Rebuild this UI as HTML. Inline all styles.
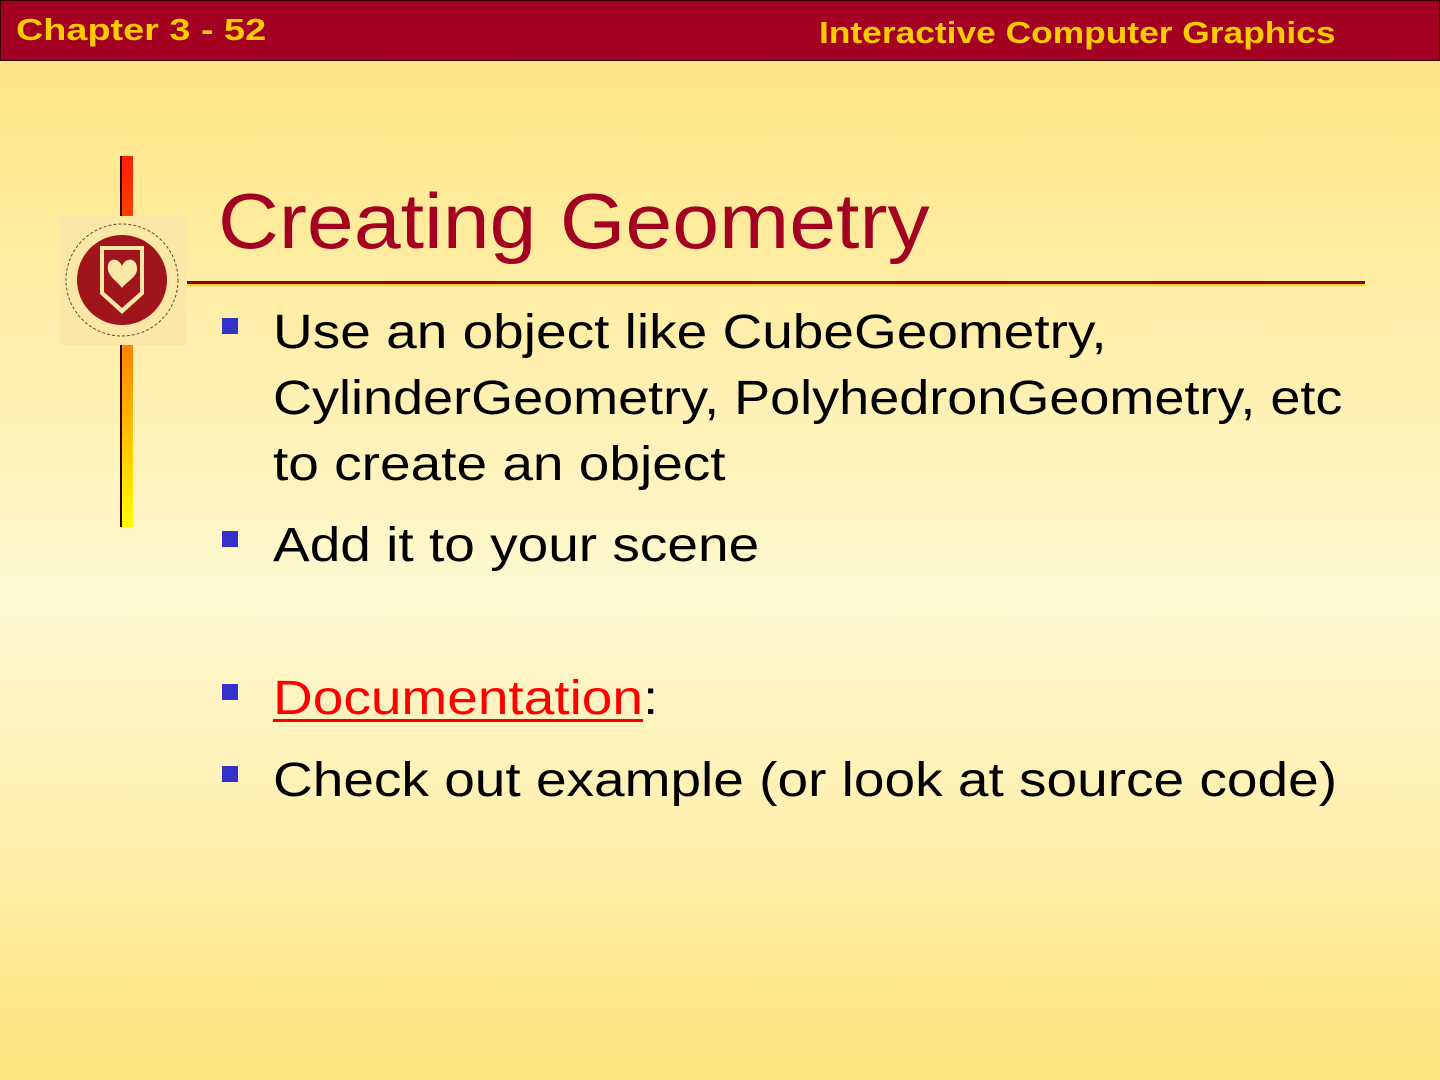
<!DOCTYPE html>
<html><head><style>
body{margin:0;width:1440px;height:1080px;overflow:hidden;position:relative;font-family:"Liberation Sans",sans-serif;
background:linear-gradient(to bottom,#fde47e 0%,#fff0b0 35%,#fff8d0 55%,#fff2b8 72%,#fde37c 100%);}
.hdr{position:absolute;left:0;top:0;width:1438px;height:59px;background:#a30022;border:1px solid #300;}
.hdr span{position:absolute;color:#ffcc00;font-weight:bold;font-size:31px;transform-origin:left top;white-space:nowrap;}
.vbar{position:absolute;left:120px;top:156px;width:11px;height:371px;border-left:2px solid #300;background:linear-gradient(#ff2000,#ff8000 50%,#ffff00);}
.logo{position:absolute;left:60px;top:216px;width:127px;height:129px;background:#fbe7a6;}
.title{position:absolute;left:218px;top:176px;font-size:78px;color:#a30022;transform:scaleX(1.08);transform-origin:left top;white-space:nowrap;}
.rule{position:absolute;left:187px;top:281px;width:1178px;height:3px;background:#8a0018;border-bottom:2px solid #ffd400;}
.t{position:absolute;left:273px;font-size:48px;color:#000;white-space:nowrap;transform:scaleX(1.146);transform-origin:left top;}
.b{position:absolute;left:222px;width:16px;height:16px;background:#3333cc;}
.a{color:#ff0000;text-decoration:underline;text-decoration-thickness:3px;text-underline-offset:5px;}
</style></head><body>
<div class="hdr"><span style="left:15px;top:11px;transform:scaleX(1.22)">Chapter 3 - 52</span><span style="left:818px;top:14px;transform:scaleX(1.14)">Interactive Computer Graphics</span></div>
<div class="vbar"></div>
<div class="logo"><svg width="127" height="129" viewBox="0 0 127 129">
<circle cx="62" cy="64" r="56" fill="none" stroke="#6b4a2a" stroke-width="1" stroke-dasharray="3 2"/>
<circle cx="62" cy="64" r="45" fill="#a0141c"/>
<path d="M40 30 H84 V78 L62 98 L40 78 Z" fill="#fbe7a6"/>
<path d="M44 34 H80 V76 L62 92 L44 76 Z" fill="#a0141c"/>
<path d="M62 50 C58 40 46 42 48 54 C50 62 58 66 62 72 C66 66 76 62 77 54 C78 42 66 40 62 50Z" fill="#fbe7a6"/>
</svg></div>
<div class="title">Creating Geometry</div>
<div class="rule"></div>
<div class="b" style="top:318px"></div>
<div class="t" style="top:305px">Use an object like CubeGeometry,</div>
<div class="t" style="top:371px;transform:scaleX(1.125)">CylinderGeometry, PolyhedronGeometry, etc</div>
<div class="t" style="top:437px">to create an object</div>
<div class="b" style="top:531px"></div>
<div class="t" style="top:518px">Add it to your scene</div>
<div class="b" style="top:684px"></div>
<div class="t" style="top:671px"><span class="a">Documentation</span>:</div>
<div class="b" style="top:766px"></div>
<div class="t" style="top:753px">Check out example (or look at source code)</div>
</body></html>
